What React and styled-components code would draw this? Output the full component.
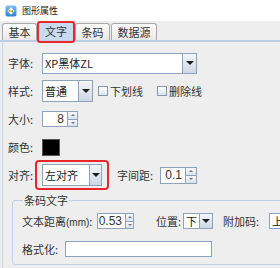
import React from 'react';
import styled, { createGlobalStyle } from 'styled-components';

const GlobalStyle = createGlobalStyle`
  html, body {
    margin: 0;
    padding: 0;
    background: #eeeeee;
  }
  body {
    font-family: 'Noto Sans CJK SC', 'Noto Sans', sans-serif;
  }
  * {
    box-sizing: border-box;
  }
`;

const Window = styled.div`
  width: 280px;
  height: 268px;
  overflow: hidden;
  background: #eeeeee;
  font-size: 11px;
  color: #333;
`;

const TitleBar = styled.div`
  height: 21px;
  background: #ffffff;
  display: flex;
  align-items: center;
  gap: 5px;
  padding-left: 5px;
  color: #222;
  font-size: 9px;
`;

const TabBar = styled.div`
  height: 21px;
  display: flex;
  align-items: flex-end;
  gap: 1px;
  padding-left: 2px;
  border-bottom: 2px solid #b9cfe7;
`;

const Tab = styled.div`
  position: relative;
  width: ${(p) => p.$w || 35}px;
  height: ${(p) => (p.$active ? 19 : 17)}px;
  display: flex;
  align-items: center;
  justify-content: center;
  border: 1px solid #a9a9a9;
  border-bottom: none;
  border-radius: 3px 3px 0 0;
  background: ${(p) =>
    p.$active ? '#c7dbf0' : 'linear-gradient(#fbfbfb, #e9e9e9)'};
  color: #333;
  line-height: 1;

  ${(p) =>
    p.$marked &&
    `&::after {
      content: '';
      position: absolute;
      left: -2px;
      right: -2px;
      top: -1px;
      bottom: -3px;
      border: 2px solid #e8262b;
      border-radius: 3px;
    }`}
`;

const Panel = styled.div`
  width: 330px;
  margin-left: 2px;
  border-left: 1px solid #c2d5ea;
  padding: 7px 0 0 5px;
  height: 230px;
`;

const Row = styled.div`
  display: flex;
  align-items: center;
  height: 28px;
`;

const Label = styled.span`
  width: ${(p) => p.$w || 34}px;
  flex-shrink: 0;
  color: #333;
  white-space: nowrap;
  margin-left: ${(p) => p.$ml || 0}px;
`;

const Small = styled.span`
  font-family: 'Liberation Sans', Arial, sans-serif;
  font-size: 10px;
`;

const ComboBox = styled.div`
  display: flex;
  width: ${(p) => p.$w}px;
  height: ${(p) => p.$h || 21}px;
  border: 1px solid #8ea3ba;
  background: #ffffff;
  flex-shrink: 0;
`;

const ComboValue = styled.span`
  flex: 1;
  display: flex;
  align-items: center;
  padding-left: 2px;
  color: #222;
  white-space: nowrap;
  overflow: hidden;
`;

const DropButton = styled.span`
  width: ${(p) => p.$w || 13}px;
  display: flex;
  align-items: center;
  justify-content: center;
  border-left: 1px solid #8ea3ba;
  background: linear-gradient(#f3f6fa, #ccd8e5);

  &::before {
    content: '';
    border-left: 4px solid transparent;
    border-right: 4px solid transparent;
    border-top: 4px solid #1f1f1f;
  }
`;

const Marked = styled.div`
  position: relative;

  &::after {
    content: '';
    position: absolute;
    left: -7px;
    right: -7px;
    top: -4px;
    bottom: -4px;
    border: 2px solid #e8262b;
    border-radius: 4px;
  }
`;

const CheckItem = styled.label`
  display: flex;
  align-items: center;
  gap: 2px;
  margin-left: ${(p) => p.$ml || 0}px;
  color: #333;
  white-space: nowrap;
`;

const CheckBox = styled.span`
  width: 10px;
  height: 10px;
  border: 1px solid #8797aa;
  background: linear-gradient(#ffffff, #dce5ee);
`;

const Spinner = styled.div`
  display: flex;
  width: ${(p) => p.$w}px;
  height: ${(p) => p.$h}px;
  flex-shrink: 0;
`;

const SpinField = styled.span`
  flex: 1;
  display: flex;
  align-items: center;
  justify-content: flex-end;
  padding-right: 3px;
  border: 1px solid #8ea3ba;
  border-right: none;
  background: #ffffff;
  color: #333;
  font-family: 'Liberation Sans', Arial, sans-serif;
  font-size: 12px;
`;

const SpinButtons = styled.span`
  width: ${(p) => p.$w || 11}px;
  display: flex;
  flex-direction: column;
  border: 1px solid #8ea3ba;
`;

const SpinHalf = styled.span`
  flex: 1;
  display: flex;
  align-items: center;
  justify-content: center;
  background: linear-gradient(#f6f8fb, #d9e2ec);
  border-top: ${(p) => (p.$down ? '1px solid #8ea3ba' : 'none')};

  &::before {
    content: '';
    border-left: 2px solid transparent;
    border-right: 2px solid transparent;
    ${(p) =>
      p.$down ? 'border-top: 2px solid #777;' : 'border-bottom: 2px solid #777;'}
  }
`;

const Swatch = styled.span`
  width: 18px;
  height: 17px;
  background: #000000;
  border: 1px solid #555;
`;

const Group = styled.fieldset`
  width: 310px;
  margin: 4px 0 0 4px;
  padding: 0 0 1px 9px;
  border: 1px solid #bcd1e8;
  border-radius: 3px;
`;

const Legend = styled.legend`
  padding: 0 1px;
  margin-left: 1px;
  line-height: 14px;
  color: #333;
`;

const TextInput = styled.span`
  display: block;
  width: ${(p) => p.$w}px;
  height: 16px;
  border: 1px solid #8ea3ba;
  background: #ffffff;
`;

function AppIcon() {
  return (
    <svg width="12" height="12" viewBox="0 0 12 12">
      <defs>
        <linearGradient id="ig" x1="0" y1="0" x2="0" y2="1">
          <stop offset="0" stopColor="#7cc0f4" />
          <stop offset="1" stopColor="#2f7fd6" />
        </linearGradient>
      </defs>
      <rect x="0.5" y="0.5" width="11" height="11" rx="2" fill="url(#ig)" />
      <path d="M6 2.2 L9.6 6 L6 9.8 L2.4 6 Z" fill="#ffffff" />
      <circle cx="4.6" cy="6" r="1.2" fill="#f5a623" />
      <circle cx="7.3" cy="6.3" r="1.1" fill="#4caf50" />
    </svg>
  );
}

function Combo({ value, w, h, btn }) {
  return (
    <ComboBox $w={w} $h={h}>
      <ComboValue>{value}</ComboValue>
      <DropButton $w={btn} />
    </ComboBox>
  );
}

function Spin({ value, w, h, btn }) {
  return (
    <Spinner $w={w} $h={h}>
      <SpinField>{value}</SpinField>
      <SpinButtons $w={btn}>
        <SpinHalf />
        <SpinHalf $down />
      </SpinButtons>
    </Spinner>
  );
}

export default function App() {
  return (
    <Window>
      <GlobalStyle />
      <TitleBar>
        <AppIcon />
        <span>图形属性</span>
      </TitleBar>
      <TabBar>
        <Tab $w={35}>基本</Tab>
        <Tab $w={36} $active $marked>文字</Tab>
        <Tab $w={35}>条码</Tab>
        <Tab $w={46}>数据源</Tab>
      </TabBar>
      <Panel>
        <Row>
          <Label>字体:</Label>
          <Combo value="XP黑体ZL" w={155} h={21} btn={14} />
        </Row>
        <Row>
          <Label>样式:</Label>
          <Combo value="普通" w={51} h={22} btn={14} />
          <CheckItem $ml={5}>
            <CheckBox />
            下划线
          </CheckItem>
          <CheckItem $ml={14}>
            <CheckBox />
            删除线
          </CheckItem>
        </Row>
        <Row>
          <Label>大小:</Label>
          <Spin value="8" w={36} h={16} btn={11} />
        </Row>
        <Row>
          <Label>颜色:</Label>
          <Swatch />
        </Row>
        <Row>
          <Label>对齐:</Label>
          <Marked>
            <Combo value="左对齐" w={60} h={22} btn={12} />
          </Marked>
          <Label $w={43} $ml={15}>字间距:</Label>
          <Spin value="0.1" w={37} h={17} btn={12} />
        </Row>
        <Group>
          <Legend>条码文字</Legend>
          <Row>
            <Label $w={75}>
              文本距离<Small>(mm)</Small>:
            </Label>
            <Spin value="0.53" w={37} h={16} btn={9} />
            <Label $w={27} $ml={22}>位置:</Label>
            <Combo value="下" w={30} h={16} btn={13} />
            <Label $w={46} $ml={10}>附加码:</Label>
            <Combo value="上" w={30} h={16} btn={13} />
          </Row>
          <Row>
            <Label $w={43}>格式化:</Label>
            <TextInput $w={147} />
          </Row>
        </Group>
      </Panel>
    </Window>
  );
}
